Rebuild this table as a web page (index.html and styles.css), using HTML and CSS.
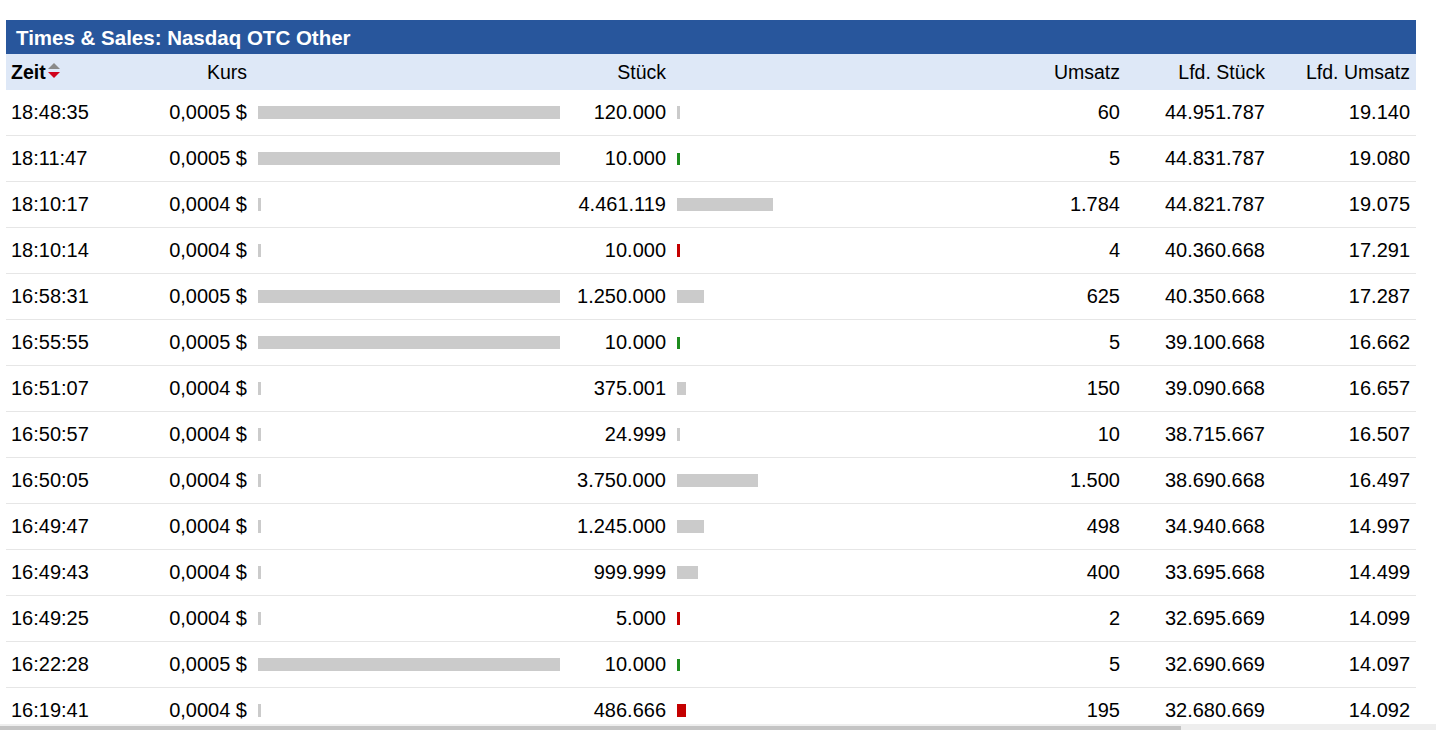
FILE: index.html
```html
<!DOCTYPE html>
<html lang="de">
<head>
<meta charset="utf-8">
<title>Times &amp; Sales</title>
<link rel="stylesheet" href="styles.css">
</head>
<body>
<div class="page">
  <section class="panel">
    <h2 class="title">Times &amp; Sales: Nasdaq OTC Other</h2>
    <div class="row head">
      <div class="c zeit"><b>Zeit</b><span class="sort"><i class="up"></i><i class="down"></i></span></div>
      <div class="c r">Kurs</div>
      <div class="c"></div>
      <div class="c r">Stück</div>
      <div class="c"></div>
      <div class="c r">Umsatz</div>
      <div class="c r">Lfd. Stück</div>
      <div class="c r">Lfd. Umsatz</div>
    </div>

    <div class="row"><div class="c zeit">18:48:35</div><div class="c r">0,0005 $</div><div class="c bar"><span class="b" style="width:302px"></span></div><div class="c r">120.000</div><div class="c bar"><span class="b" style="width:3px"></span></div><div class="c r">60</div><div class="c r">44.951.787</div><div class="c r">19.140</div></div>
    <div class="row"><div class="c zeit">18:11:47</div><div class="c r">0,0005 $</div><div class="c bar"><span class="b" style="width:302px"></span></div><div class="c r">10.000</div><div class="c bar"><span class="b g" style="width:3px"></span></div><div class="c r">5</div><div class="c r">44.831.787</div><div class="c r">19.080</div></div>
    <div class="row"><div class="c zeit">18:10:17</div><div class="c r">0,0004 $</div><div class="c bar"><span class="b" style="width:3px"></span></div><div class="c r">4.461.119</div><div class="c bar"><span class="b" style="width:96px"></span></div><div class="c r">1.784</div><div class="c r">44.821.787</div><div class="c r">19.075</div></div>
    <div class="row"><div class="c zeit">18:10:14</div><div class="c r">0,0004 $</div><div class="c bar"><span class="b" style="width:3px"></span></div><div class="c r">10.000</div><div class="c bar"><span class="b rd" style="width:3px"></span></div><div class="c r">4</div><div class="c r">40.360.668</div><div class="c r">17.291</div></div>
    <div class="row"><div class="c zeit">16:58:31</div><div class="c r">0,0005 $</div><div class="c bar"><span class="b" style="width:302px"></span></div><div class="c r">1.250.000</div><div class="c bar"><span class="b" style="width:27px"></span></div><div class="c r">625</div><div class="c r">40.350.668</div><div class="c r">17.287</div></div>
    <div class="row"><div class="c zeit">16:55:55</div><div class="c r">0,0005 $</div><div class="c bar"><span class="b" style="width:302px"></span></div><div class="c r">10.000</div><div class="c bar"><span class="b g" style="width:3px"></span></div><div class="c r">5</div><div class="c r">39.100.668</div><div class="c r">16.662</div></div>
    <div class="row"><div class="c zeit">16:51:07</div><div class="c r">0,0004 $</div><div class="c bar"><span class="b" style="width:3px"></span></div><div class="c r">375.001</div><div class="c bar"><span class="b" style="width:9px"></span></div><div class="c r">150</div><div class="c r">39.090.668</div><div class="c r">16.657</div></div>
    <div class="row"><div class="c zeit">16:50:57</div><div class="c r">0,0004 $</div><div class="c bar"><span class="b" style="width:3px"></span></div><div class="c r">24.999</div><div class="c bar"><span class="b" style="width:3px"></span></div><div class="c r">10</div><div class="c r">38.715.667</div><div class="c r">16.507</div></div>
    <div class="row"><div class="c zeit">16:50:05</div><div class="c r">0,0004 $</div><div class="c bar"><span class="b" style="width:3px"></span></div><div class="c r">3.750.000</div><div class="c bar"><span class="b" style="width:81px"></span></div><div class="c r">1.500</div><div class="c r">38.690.668</div><div class="c r">16.497</div></div>
    <div class="row"><div class="c zeit">16:49:47</div><div class="c r">0,0004 $</div><div class="c bar"><span class="b" style="width:3px"></span></div><div class="c r">1.245.000</div><div class="c bar"><span class="b" style="width:27px"></span></div><div class="c r">498</div><div class="c r">34.940.668</div><div class="c r">14.997</div></div>
    <div class="row"><div class="c zeit">16:49:43</div><div class="c r">0,0004 $</div><div class="c bar"><span class="b" style="width:3px"></span></div><div class="c r">999.999</div><div class="c bar"><span class="b" style="width:21px"></span></div><div class="c r">400</div><div class="c r">33.695.668</div><div class="c r">14.499</div></div>
    <div class="row"><div class="c zeit">16:49:25</div><div class="c r">0,0004 $</div><div class="c bar"><span class="b" style="width:3px"></span></div><div class="c r">5.000</div><div class="c bar"><span class="b rd" style="width:3px"></span></div><div class="c r">2</div><div class="c r">32.695.669</div><div class="c r">14.099</div></div>
    <div class="row"><div class="c zeit">16:22:28</div><div class="c r">0,0005 $</div><div class="c bar"><span class="b" style="width:302px"></span></div><div class="c r">10.000</div><div class="c bar"><span class="b g" style="width:3px"></span></div><div class="c r">5</div><div class="c r">32.690.669</div><div class="c r">14.097</div></div>
    <div class="row"><div class="c zeit">16:19:41</div><div class="c r">0,0004 $</div><div class="c bar"><span class="b" style="width:3px"></span></div><div class="c r">486.666</div><div class="c bar"><span class="b rd" style="width:9px"></span></div><div class="c r">195</div><div class="c r">32.680.669</div><div class="c r">14.092</div></div>
  </section>
</div>
<div class="hscroll"><div class="thumb"></div></div>
</body>
</html>
```

FILE: styles.css
```css
html, body {
  margin: 0;
  padding: 0;
  background: #ffffff;
  overflow: hidden;
}
body {
  font-family: "Liberation Sans", Arial, sans-serif;
  color: #000;
}
.page {
  padding: 20px 20px 0 6px;
}
.panel {
  width: 1410px;
}
.title {
  margin: 0;
  height: 34px;
  line-height: 35px;
  background: #28569c;
  color: #fff;
  font-size: 20.5px;
  font-weight: bold;
  padding-left: 10px;
}
.row {
  display: grid;
  grid-template-columns: 144px 97px 321px 98px 334px 120px 145px 145px;
  height: 45px;
  align-items: center;
  border-bottom: 1px solid #e6e6e6;
  font-size: 20px;
}
.row.head {
  height: 36px;
  background: #dee8f7;
  border-bottom: none;
  font-size: 19.5px;
}
.c {
  white-space: nowrap;
}
.r {
  text-align: right;
}
.zeit {
  padding-left: 5px;
  display: flex;
  align-items: center;
}
.sort {
  display: inline-flex;
  flex-direction: column;
  gap: 3px;
  margin-left: 2px;
  margin-top: -3px;
}
.sort i {
  display: block;
  width: 0;
  height: 0;
  border-left: 6px solid transparent;
  border-right: 6px solid transparent;
}
.sort .up {
  border-bottom: 6px solid #8a8a8a;
}
.sort .down {
  border-top: 6px solid #d0021b;
}
.bar {
  padding-left: 11px;
  display: flex;
  align-items: center;
}
.b {
  display: block;
  height: 13px;
  background: #cbcbcb;
}
.b.g {
  background: #1e8c1e;
  height: 12px;
}
.b.rd {
  background: #c40000;
}
.hscroll {
  position: fixed;
  left: 0;
  bottom: 0;
  width: 100%;
  height: 6px;
  background: #eeeeee;
  display: flex;
  align-items: flex-end;
}
.thumb {
  width: 1181px;
  height: 4px;
  background: #c4c4c4;
}
```
